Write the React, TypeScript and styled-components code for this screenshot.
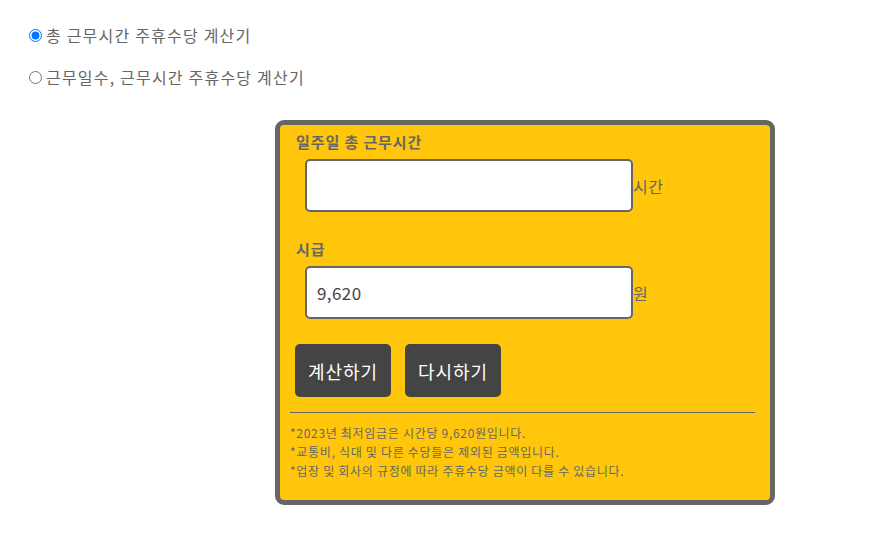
import styled, { createGlobalStyle } from 'styled-components';

const GlobalStyle = createGlobalStyle`
  body {
    margin: 0;
    font-family: "Noto Sans CJK KR", "Noto Sans", sans-serif;
    color: #666;
    background: #fff;
  }
`;

const Page = styled.div`
  padding: 23px 0 0 23px;
`;

const ModeList = styled.div`
  display: flex;
  flex-direction: column;
  gap: 18px;
`;

const ModeOption = styled.label`
  display: flex;
  align-items: center;
  height: 24px;
  font-size: 16px;
  letter-spacing: 1.2px;
  color: #666;
  input {
    margin: 0 4px 0 6px;
    width: 13px;
    height: 13px;
  }
`;

const CardWrap = styled.div`
  display: flex;
  padding: 31px 0 0 252px;
`;

const Card = styled.section`
  width: 490px;
  border: 5px solid #666;
  border-radius: 9px;
  background: #ffc60b;
  padding: 5px 0 20px;
  box-sizing: content-box;
`;

const FieldLabel = styled.div`
  padding-left: 16px;
  font-size: 15px;
  font-weight: 700;
  letter-spacing: 0.9px;
  line-height: 23px;
  color: #666;
`;

const InputRow = styled.div`
  display: flex;
  align-items: center;
  padding-left: 25px;
  margin-top: 6px;
  margin-bottom: 25px;
`;

const TextInput = styled.input`
  width: 328px;
  height: 53px;
  box-sizing: border-box;
  border: 2px solid #666;
  border-radius: 5px;
  background: #fff;
  padding: 0 10px;
  font-family: "Noto Sans CJK KR", "Noto Sans", sans-serif;
  font-size: 17px;
  letter-spacing: 0.4px;
  color: #444;
  outline: none;
`;

const Unit = styled.span`
  font-size: 16px;
  letter-spacing: 0.6px;
  color: #666;
`;

const Buttons = styled.div`
  display: flex;
  gap: 14px;
  padding-left: 15px;
`;

const Button = styled.button`
  width: 96px;
  height: 53px;
  border: none;
  border-radius: 5px;
  background: #444;
  color: #fff;
  font-family: "Noto Sans CJK KR", "Noto Sans", sans-serif;
  font-size: 18px;
  letter-spacing: 1px;
  cursor: pointer;
`;

const Divider = styled.hr`
  margin: 15px 15px 10px 10px;
  border: none;
  border-top: 1px solid #666;
`;

const Notes = styled.div`
  padding-left: 10px;
  font-size: 12px;
  letter-spacing: 0.7px;
  line-height: 19px;
  color: #666;
`;

export default function App() {
  return (
    <Page>
      <GlobalStyle />
      <ModeList>
        <ModeOption>
          <input type="radio" name="mode" defaultChecked />
          총 근무시간 주휴수당 계산기
        </ModeOption>
        <ModeOption>
          <input type="radio" name="mode" />
          근무일수, 근무시간 주휴수당 계산기
        </ModeOption>
      </ModeList>
      <CardWrap>
        <Card>
          <FieldLabel>일주일 총 근무시간</FieldLabel>
          <InputRow>
            <TextInput type="text" />
            <Unit>시간</Unit>
          </InputRow>
          <FieldLabel>시급</FieldLabel>
          <InputRow>
            <TextInput type="text" defaultValue="9,620" />
            <Unit>원</Unit>
          </InputRow>
          <Buttons>
            <Button>계산하기</Button>
            <Button>다시하기</Button>
          </Buttons>
          <Divider />
          <Notes>
            <div>*2023년 최저임금은 시간당 9,620원입니다.</div>
            <div>*교통비, 식대 및 다른 수당들은 제외된 금액입니다.</div>
            <div>*업장 및 회사의 규정에 따라 주휴수당 금액이 다를 수 있습니다.</div>
          </Notes>
        </Card>
      </CardWrap>
    </Page>
  );
}
